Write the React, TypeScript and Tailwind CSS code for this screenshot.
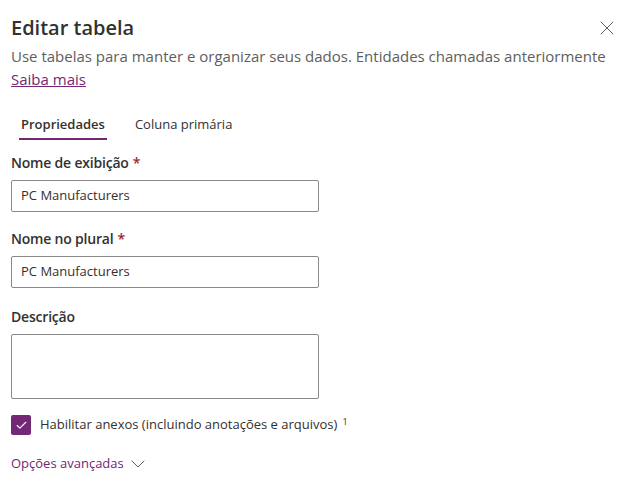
import React from 'react'
import { X, Check, ChevronDown } from 'lucide-react'

const font = { fontFamily: '"Open Sans", "Noto Sans", sans-serif' }

const Field: React.FC<{ label: string; required?: boolean; value: string }> = ({ label, required, value }) => (
  <div className="flex flex-col">
    <div className="h-[22px] text-[14px] font-semibold text-[#323130] leading-[22px] tracking-[-0.2px]">
      {label}
      {required && <span className="text-[#a4262c] ml-1">*</span>}
    </div>
    <div className="mt-[6px] w-[308px] h-[32px] border border-[#8a8886] rounded-[2px] px-[9px] flex items-center text-[13px] text-[#323130]">
      {value}
    </div>
  </div>
)

export default function App() {
  return (
    <div className="w-[639px] h-[504px] bg-white text-[#323130]" style={font}>
      <div className="px-[11px] pt-[14px]">
        <div className="flex items-start justify-between">
          <h1 className="text-[20px] font-semibold leading-[28px] text-[#323130]">Editar tabela</h1>
          <button className="mt-[2px] mr-[9px] text-[#605e5c]">
            <X className="h-[24px] w-[24px]" strokeWidth={1} />
          </button>
        </div>
        <p className="text-[15px] leading-[22px] text-[#605e5c] mt-[3px]">
          Use tabelas para manter e organizar seus dados. Entidades chamadas anteriormente
        </p>
        <a className="text-[15px] leading-[21px] text-[#742774] underline">Saiba mais</a>

        <div className="flex mt-[22px] ml-[8px] text-[13px]">
          <div className="flex flex-col items-center">
            <span className="px-[2px] leading-[22px] font-semibold text-[#323130]">Propriedades</span>
            <div className="mt-[3px] h-[2px] w-full bg-[#742774]" />
          </div>
          <span className="ml-[28px] leading-[22px] text-[#323130]">Coluna primária</span>
        </div>

        <div className="mt-[12px] flex flex-col gap-[16px]">
          <Field label="Nome de exibição" required value="PC Manufacturers" />
          <Field label="Nome no plural" required value="PC Manufacturers" />
          <div className="mt-[2px] flex flex-col">
            <div className="h-[22px] text-[14px] font-semibold text-[#323130] leading-[22px] tracking-[-0.2px]">Descrição</div>
            <div className="mt-[6px] w-[308px] h-[65px] border border-[#8a8886] rounded-[2px]" />
          </div>
        </div>

        <div className="mt-[16px] flex items-center">
          <div className="h-[20px] w-[20px] rounded-[2px] bg-[#742774] flex items-center justify-center">
            <Check className="h-[13px] w-[13px] text-white" strokeWidth={2} />
          </div>
          <span className="ml-[9px] text-[13px] text-[#323130]">
            Habilitar anexos (incluindo anotações e arquivos)
            <sup className="ml-[5px] text-[9px]">1</sup>
          </span>
        </div>

        <div className="mt-[17px] flex items-center text-[13px] text-[#742774]">
          <span>Opções avançadas</span>
          <ChevronDown className="ml-[2px] h-[24px] w-[24px] text-[#605e5c]" strokeWidth={1} />
        </div>
      </div>
    </div>
  )
}
